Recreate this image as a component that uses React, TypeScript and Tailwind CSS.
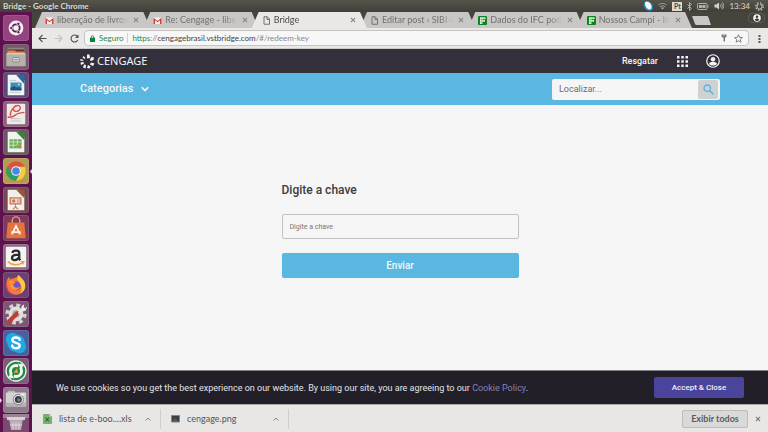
import type { ReactNode } from "react";

type TabProps = {
    title: string;
    icon: ReactNode;
    active?: boolean;
};

const UBUNTU = "font-[Lato,sans-serif]";

function GmailIcon() {
    return (
        <svg className="w-[9px] h-[9px] shrink-0" viewBox="0 0 18 18">
            <path d="M1 3h16v13H1z" fill="#f4f1f0"/>
            <path d="M1 16V3.5l8 6.5 8-6.5V16h-3V8.5l-5 4-5-4V16z" fill="#d93b30"/>
        </svg>
    );
}

function PageIcon() {
    return (
        <svg className="w-[9px] h-[9px] shrink-0" viewBox="0 0 18 18" fill="none" stroke="#717171" strokeWidth={2}>
            <path d="M4 1.500h6.500L15 6v10.500H4z"/>
            <path d="M10 1.500V7h5"/>
        </svg>
    );
}

function InstituteIcon() {
    return (
        <svg className="w-[9px] h-[9px] shrink-0" viewBox="0 0 18 18">
            <rect width="18" height="18" rx="2" fill="#0b851d"/>
            <path d="M4 2.500h11v4H9v1.500h5v4H9v4H4z" fill="#e9f5e9"/>
            <path d="M7.500 2.500v13M4 6.800h11M4 11.500h10M11.500 2.500v9" stroke="#0b851d" strokeWidth={0.6}/>
        </svg>
    );
}

function CloseIcon({ className }: { className: string }) {
    return (
        <svg className={className} viewBox="0 0 10 10" fill="none" stroke="currentColor" strokeWidth={1.8}>
            <path d="M1.500 1.500l7 7M8.500 1.500l-7 7"/>
        </svg>
    );
}

function Tab({ title, icon, active }: TabProps) {
    return (
        <div
            className={`flex-1 min-w-0 -mr-[7px] h-4 pl-[10px] pr-[9px] flex items-center gap-[3px] [clip-path:polygon(7px_0,calc(100%-7px)_0,100%_100%,0_100%)] ${active ? "relative z-10 bg-[#e9e8e7] text-[#4c4c4c]" : "bg-[#c8c7c5] text-[#717171]"}`}
        >
            {icon}
            <span className="flex-1 min-w-0 text-[9px] leading-4 whitespace-nowrap [mask-image:linear-gradient(to_right,black_82%,transparent)]">{title}</span>
            <button aria-label="Fechar guia" className="shrink-0 px-[2px] text-[#858585]">
                <CloseIcon className="w-[6px] h-[6px]"/>
            </button>
        </div>
    );
}

const tabs: TabProps[] = [
    { title: "liberação de livros -", icon: <GmailIcon/> },
    { title: "Re: Cengage - libera", icon: <GmailIcon/> },
    { title: "Bridge", icon: <PageIcon/>, active: true },
    { title: "Editar post ‹ SIBI-IF", icon: <PageIcon/> },
    { title: "Dados do IFC poder", icon: <InstituteIcon/> },
    { title: "Nossos Campi - Inst", icon: <InstituteIcon/> },
];

const launcherItems: { name: string; tile: string; art: ReactNode; running?: boolean }[] = [
    {
        name: "Dash",
        tile: "bg-[#94437f]",
        art: (
            <>
                <circle cx="13" cy="13" r="8" fill="#f6eef4"/>
                <circle cx="13" cy="13" r="4" fill="none" stroke="#5a2049" strokeWidth="2"/>
                <g fill="#5a2049" stroke="#f6eef4" strokeWidth="0.8">
                    <circle cx="7.800" cy="13" r="1.700"/>
                    <circle cx="15.600" cy="8.500" r="1.700"/>
                    <circle cx="15.600" cy="17.500" r="1.700"/>
                </g>
            </>
        ),
    },
    {
        name: "Arquivos",
        tile: "bg-[#77576b]",
        art: (
            <>
                <path d="M4 3h18l1 6H3z" fill="#8c8783"/>
                <path d="M4 5h18v6H4z" fill="#593629"/>
                <path d="M4 6h8l1 1h9v5H4z" fill="#e38a54"/>
                <rect x="2.500" y="9" width="21" height="14" rx="1" fill="#b5b2ae"/>
                <path d="M3 9.500h20" stroke="#dedbd8"/>
                <rect x="9.500" y="13.500" width="7" height="5" rx="1" fill="#dad8d5" stroke="#7a7774" strokeWidth="0.8"/>
                <path d="M11 16h4" stroke="#777"/>
            </>
        ),
    },
    {
        name: "Writer",
        tile: "bg-[#5e4a76]",
        art: (
            <>
                <path d="M4 2h12l6 6v16H4z" fill="#f1f3f4"/>
                <path d="M13 2h9v10z" fill="#246a9b"/>
                <path d="M6 8h7M6 10h11M6 21h12" stroke="#a9bdc9" strokeWidth="0.8"/>
                <rect x="7" y="10.500" width="12" height="8" fill="#3691bd"/>
                <path d="M7 16l4-2 3 2 2-1 3 2v2H7z" fill="#28556c"/>
                <circle cx="16" cy="12.500" r="1" fill="#cce8f4"/>
            </>
        ),
    },
    {
        name: "Evince",
        tile: "bg-[#8d607a]",
        art: (
            <>
                <rect x="3" y="2" width="20" height="22" rx="1" fill="#edebea"/>
                <path d="M4 16c4 2 7-1 10-3 4-2 7-1 8-2M7 15C6 9 12 3 16 4c4 2 0 7-4 6-3-1-2-5 1-6" fill="none" stroke="#d9534b" strokeWidth="1.500"/>
                <path d="M7 18h11M7 20.500h11" stroke="#bdbab9" strokeWidth="0.800"/>
            </>
        ),
    },
    {
        name: "Calc",
        tile: "bg-[#695861]",
        art: (
            <>
                <path d="M4 2h12l6 6v16H4z" fill="#f0f3ee"/>
                <path d="M13 2h9v9z" fill="#368432"/>
                <rect x="6" y="10" width="13" height="10" fill="#69af57"/>
                <path d="M6 13h13M6 16.500h13M10 10v10M14.500 10v10" stroke="#e4f1df" strokeWidth="0.800"/>
                <path d="M14 16h1.500v3H14zM16.500 14.500H18V19h-1.500z" fill="#d77137"/>
            </>
        ),
    },
    {
        name: "Google Chrome",
        tile: "bg-[#b39b51]",
        running: true,
        art: (
            <>
                <circle cx="13" cy="13" r="10.500" fill="#dd5143"/>
                <path d="M3.900 7.750A10.500 10.500 0 0 0 13 23.500l5-9-5 3-5-3z" fill="#25a464"/>
                <path d="M13 23.500A10.500 10.500 0 0 0 22.500 8.500H13l5 6z" fill="#f5cd41"/>
                <circle cx="13" cy="13" r="5.200" fill="#f3f4f5"/>
                <circle cx="13" cy="13" r="4.100" fill="#4588e8"/>
            </>
        ),
    },
    {
        name: "Impress",
        tile: "bg-[#774a53]",
        art: (
            <>
                <path d="M4 2h12l6 6v16H4z" fill="#f2eeeb"/>
                <path d="M13 2h9v9z" fill="#9c5632"/>
                <path d="M6 10h13v8H6zM12 18h1v2l3 3h-2l-1.500-2-1.500 2H9l3-3z" fill="#c87857"/>
                <path d="M7.500 11.500h10v5h-10z" fill="#f1d7c8"/>
                <circle cx="10.500" cy="14" r="1.800" fill="#c87857"/>
                <path d="M14 13h3M14 15h3" stroke="#c87857" strokeWidth="0.800"/>
            </>
        ),
    },
    {
        name: "Programas do Ubuntu",
        tile: "bg-[#7b3c5b]",
        art: (
            <>
                <path d="M9 8V5a4 4 0 0 1 8 0v3" fill="none" stroke="#eb9b75" strokeWidth="1.500"/>
                <path d="M4 7h18l1.500 17h-21z" fill="#e4733d"/>
                <path d="M8.500 20l4.500-9 4.500 9M8 17.500h10" fill="none" stroke="#fff2e9" strokeWidth="2"/>
            </>
        ),
    },
    {
        name: "Amazon",
        tile: "bg-[#8a6a80]",
        art: (
            <>
                <rect x="2" y="2" width="22" height="22" rx="1" fill="#f4f3f2"/>
                <path d="M9 8.500c1-3.500 7.500-3 7.500 0V15l1.200 1.500M16 10.500c-5 0-7.300 1-7.300 3.500 0 3.300 5.800 3 7.300-.5" fill="none" stroke="#292929" strokeWidth="2.500"/>
                <path d="M4 18c5 4.500 12 4.500 17 .7M18 18h3.500L20 21" fill="none" stroke="#f0a13b" strokeWidth="1.500"/>
            </>
        ),
    },
    {
        name: "Firefox",
        tile: "bg-[#6b416f]",
        art: (
            <>
                <path d="M13 5l3-3c1 3 7 5 7 12 0 5-4 9.500-10 9.500S2.500 19 2.500 13c0-4 1-7 3-9l1 3c2-1 4-1 6.500-2z" fill="#f57937"/>
                <path d="M16 2c1 3 7 5 7 12 0 4-3 7-5 8 3-6 0-11-4-15z" fill="#fbc93d"/>
                <path d="M3 10c0 7 3 12 9 13.500-6 0-9.500-4-9.500-10z" fill="#e53a69"/>
                <circle cx="13" cy="14" r="5" fill="#7552c6"/>
                <path d="M5 9c3-2 5 0 8 1l-3 2c0 4 4 5 7 3-2 6-11 4-11-3z" fill="#fb9438"/>
            </>
        ),
    },
    {
        name: "Configurações do sistema",
        tile: "bg-[#7a5873]",
        art: (
            <>
                <circle cx="13" cy="13" r="9.500" fill="none" stroke="#d5d3d2" strokeWidth="4" strokeDasharray="4 3.460"/>
                <circle cx="13" cy="13" r="6" fill="#a9a6a8" stroke="#e2e0df" strokeWidth="4"/>
                <path d="M6 20.500l8-8" stroke="#c13b35" strokeWidth="4.500" strokeLinecap="round"/>
                <path d="M15 12l4-4c-1-3 1-5 3-5l-1 3 2 1 2-2c0 4-3 5-5 4l-4 4z" fill="#f0eeee"/>
            </>
        ),
    },
    {
        name: "Skype",
        tile: "bg-[#4b609a]",
        art: (
            <>
                <circle cx="9" cy="9" r="7" fill="#1fa9e5"/>
                <circle cx="17" cy="17" r="7" fill="#1fa9e5"/>
                <circle cx="13" cy="13" r="9.500" fill="#1fa9e5"/>
                <path d="M17 9.500c-1-3.500-8-3-8 .3 0 4 8 2 8 6 0 3.800-7.500 4-8.200 0" fill="none" stroke="#fff" strokeWidth="2.600" strokeLinecap="round"/>
            </>
        ),
    },
    {
        name: "Sincronizador",
        tile: "bg-[#7c5d78]",
        art: (
            <>
                <circle cx="13" cy="13" r="10.800" fill="#23894b" stroke="#e8f3e9" strokeWidth="1.500"/>
                <circle cx="13" cy="13" r="6" fill="none" stroke="#f3f9ed" strokeWidth="3.200"/>
                <path d="M17 3l-1 7M9 23l1-7" stroke="#23894b" strokeWidth="2"/>
                <path d="M15 5l6 1-2 6zM11 21l-6-1 2-6z" fill="#f3f9ed"/>
                <path d="M10.500 15l3.500-5 1.500 5z" fill="#e8a832"/>
            </>
        ),
    },
    {
        name: "Captura de tela",
        tile: "bg-[#8e7b8c]",
        running: true,
        art: (
            <>
                <path d="M4 6V3h8v3z" fill="#b9b6b9"/>
                <rect x="2" y="5" width="22" height="15" rx="1" fill="#d3d1d1"/>
                <path d="M2 16h22v4H2z" fill="#b4b0b4"/>
                <circle cx="15.500" cy="12.500" r="5.500" fill="#eceaea" stroke="#777579" strokeWidth="1"/>
                <circle cx="15.500" cy="12.500" r="3.800" fill="#333b43"/>
                <circle cx="16" cy="13" r="1.800" fill="#6c8195"/>
                <path d="M18 7h4" stroke="#f4f4f4" strokeWidth="1.500"/>
            </>
        ),
    },
];

function Launcher() {
    return (
        <aside className="w-8 shrink-0 bg-[#5d114e] flex flex-col">
            <nav className="flex-1 pt-[3px] pb-px flex flex-col items-center justify-between">
                {launcherItems.map(item => (
                    <button key={item.name} aria-label={item.name} className="relative w-full flex justify-center">
                        <svg className={`w-[26px] h-[26px] rounded-[3px] border border-white/10 ${item.tile}`} viewBox="0 0 26 26">
                            {item.art}
                        </svg>
                        {item.running && (
                            <svg className="absolute left-0 top-[11px] w-[2px] h-[5px]" viewBox="0 0 2 5">
                                <path d="M0 0l2 2.500L0 5z" fill="#e8dbe5"/>
                            </svg>
                        )}
                        {item.name === "Google Chrome" && (
                            <svg className="absolute right-0 top-[11px] w-[2px] h-[5px]" viewBox="0 0 2 5">
                                <path d="M2 0L0 2.500 2 5z" fill="#e8dbe5"/>
                            </svg>
                        )}
                    </button>
                ))}
            </nav>
            <button aria-label="Lixeira" className="flex justify-center">
                <svg className="w-[26px] h-[18px] bg-[#7a4a70]" viewBox="0 0 26 18">
                    <path d="M0 0h26v4H0z" fill="#9c8297"/>
                    <path d="M6 5h14l-2 11H8z" fill="#b6a8b3"/>
                    <path d="M4 3h18v3H4z" fill="#d9d1d7"/>
                    <path d="M10 8v7M13 8v7M16 8v7M7 11h12" stroke="#e5dde3" strokeWidth="0.800"/>
                </svg>
            </button>
        </aside>
    );
}

function SystemBar() {
    return (
        <header className="h-3 px-[3px] bg-linear-to-b from-[#56544b] to-[#403f39] text-[#dcd8ce] flex items-center justify-between">
            <span className="text-[8px] leading-3 font-bold">Bridge - Google Chrome</span>
            <div className="flex items-center gap-[5px]">
                <svg className="w-[10px] h-[10px]" viewBox="0 0 20 20">
                    <path d="M3 1l8-1 8 7 1 10-6 3-8-2-5-8z" fill="#1792c9"/>
                    <path d="M5 2c6-2 13 4 12 11-1 6-8 5-11-1-2-4-3-8-1-10z" fill="#f6fafb"/>
                </svg>
                <svg className="w-[9px] h-[7px]" viewBox="0 0 18 14" fill="none" stroke="#aaa79e" strokeWidth={2}>
                    <path d="M1 4c5-4 11-4 16 0M4 8c3-3 7-3 10 0"/>
                    <path d="M9 13l-3-3c2-2 4-2 6 0z" fill="#aaa79e" stroke="none"/>
                </svg>
                <span className="w-[10px] h-[9px] bg-[#dedbd3] text-[#4a4943] text-[7px] leading-[9px] font-bold text-center">Pt</span>
                <svg className="w-[5px] h-[9px]" viewBox="0 0 10 18" fill="none" stroke="#bab7ae" strokeWidth={1.8}>
                    <path d="M1 5l8 8-4 4V1l4 4-8 8"/>
                </svg>
                <svg className="w-[12px] h-[7px]" viewBox="0 0 24 14">
                    <rect x="1" y="1" width="19" height="12" rx="2" fill="none" stroke="#b5b2a9" strokeWidth="2"/>
                    <path d="M4 4h5l2 2 1-2h5v6h-5l-2-2-1 2H4zM21 5h2v4h-2z" fill="#b5b2a9"/>
                </svg>
                <svg className="w-[10px] h-[8px]" viewBox="0 0 20 16" fill="none" stroke="#b5b2a9" strokeWidth={1.8}>
                    <path d="M1 5h4l5-4v14l-5-4H1z" fill="#d6d3ca" stroke="none"/>
                    <path d="M12 5c2 2 2 4 0 6M14 3c4 3 4 7 0 10M16 1c5 4 5 10 0 14"/>
                </svg>
                <span className="text-[8px] leading-3">13:34</span>
                <svg className="w-[9px] h-[9px] mr-px" viewBox="0 0 18 18" fill="none" stroke="#c9c6bd">
                    <circle cx="9" cy="9" r="5" strokeWidth="2"/>
                    <circle cx="9" cy="9" r="7.500" strokeWidth="2.500" strokeDasharray="3 2.890"/>
                    <path d="M9 2v6" stroke="#47463f" strokeWidth="2.500"/>
                </svg>
            </div>
        </header>
    );
}

function TabStrip() {
    return (
        <div className="h-4 pl-[3px] bg-[#45443d] flex items-start">
            <div className="flex-1 min-w-0 flex pr-[7px]">
                {tabs.map(tab => (
                    <Tab key={tab.title} {...tab}/>
                ))}
            </div>
            <button aria-label="Nova guia" className="w-[19px] h-[9px] mt-1">
                <svg className="w-full h-full" viewBox="0 0 19 9">
                    <path d="M0 0h15q1 0 1.300 1L19 9H5q-1.500 0-2-1z" fill="#c8c7c5"/>
                </svg>
            </button>
            <button aria-label="Perfil" className="w-[17px] h-[10px] mt-px ml-[37px] mr-[3px] rounded-sm border border-[#5c5b54] flex items-center justify-center">
                <svg className="w-2 h-2" viewBox="0 0 16 16">
                    <circle cx="8" cy="8" r="7.500" fill="#f4f4f2"/>
                    <circle cx="8" cy="5.500" r="2.500" fill="#3c3b36"/>
                    <path d="M3.500 12c1-4 8-4 9 0-2 2.500-7 2.500-9 0z" fill="#3c3b36"/>
                </svg>
            </button>
        </div>
    );
}

function Toolbar() {
    return (
        <div className="h-[21px] pl-[6px] pr-[7px] bg-[#e9e8e7] border-b border-[#c9c8c7] flex items-center">
            <button aria-label="Voltar">
                <svg className="w-[9px] h-[9px]" viewBox="0 0 18 18" fill="none" stroke="#4f4f4f" strokeWidth={2.2}>
                    <path d="M17 9H2M9 2L2 9l7 7"/>
                </svg>
            </button>
            <button aria-label="Avançar" className="ml-[7px]">
                <svg className="w-[9px] h-[9px]" viewBox="0 0 18 18" fill="none" stroke="#c3c2c1" strokeWidth={2.2}>
                    <path d="M1 9h15M9 2l7 7-7 7"/>
                </svg>
            </button>
            <button aria-label="Recarregar" className="ml-[7px]">
                <svg className="w-[9px] h-[9px]" viewBox="0 0 18 18" fill="none" stroke="#4f4f4f" strokeWidth={2.2}>
                    <path d="M15.500 12A7 7 0 1 1 14 4l2 2"/>
                    <path d="M17 1v7h-7z" fill="#4f4f4f" stroke="none"/>
                </svg>
            </button>
            <div className="flex-1 h-4 ml-[5px] px-[5px] bg-[#f7f7f7] rounded-sm border border-[#c5c4c3] flex items-center text-[8px] leading-[14px]">
                <svg className="w-[5px] h-[7px] shrink-0" viewBox="0 0 10 14">
                    <path d="M2.500 6V4a2.500 2.500 0 0 1 5 0v2" fill="none" stroke="#0b8043" strokeWidth="1.600"/>
                    <path d="M0 5.500h10V14H0z" fill="#0b8043"/>
                </svg>
                <span className="ml-1 pr-1 text-[#1c8a4c]">Seguro</span>
                <span className="w-px h-[10px] mr-1 bg-[#d0d0d0]"></span>
                <span className="flex-1 text-[#8a8a8a]">
                    <span className="text-[#1c8a4c]">https</span>://<span className="text-[#3f3f3f]">cengagebrasil.vstbridge.com</span>/#/redeem-key
                </span>
                <svg className="w-[6px] h-[8px]" viewBox="0 0 12 16" fill="#767676">
                    <path d="M1 1h10v4L8 8v7H5V8L1 5z"/>
                    <path d="M4 3h4" stroke="#ddd"/>
                </svg>
                <svg className="w-[9px] h-[9px] ml-[7px]" viewBox="0 0 18 18" fill="none" stroke="#666" strokeWidth={1.6}>
                    <path d="M9 1.500l2.200 5.200 5.600.5-4.200 3.700 1.200 5.500L9 13.500l-4.800 2.900 1.200-5.500L1.200 7.200l5.600-.5z"/>
                </svg>
            </div>
            <button aria-label="Menu" className="ml-[9px]">
                <svg className="w-[3px] h-[9px]" viewBox="0 0 3 9" fill="#555">
                    <path d="M.5 1h2v2h-2zM.5 4h2v2h-2zM.5 7h2v2h-2z"/>
                </svg>
            </button>
        </div>
    );
}

function SiteHeader() {
    return (
        <>
            <div className="h-6 px-12 bg-[#33303b] flex items-center justify-between text-[#f5f5f5]">
                <a href="#" className="flex items-center gap-[2px]">
                    <svg className="w-[15px] h-[15px]" viewBox="0 0 30 30" fill="#f5f5f5">
                        <path d="M14 1l5 0 1 7-6 1z"/>
                        <path d="M23 6l5 1-1 5-6 2-1-3z"/>
                        <path d="M22 17l7 2-3 5-6-3z"/>
                        <path d="M16 22l5 3-2 4-5-1z"/>
                        <path d="M8 21l4 1-1 7-5-2z"/>
                        <path d="M1 17l6-1 1 3-6 3z"/>
                        <path d="M1 10l6 2-1 2-6-1z"/>
                        <path d="M7 4l4 4-2 2-4-3z"/>
                    </svg>
                    <span className="text-[11px] leading-4 font-['Noto_Sans',sans-serif]">CENGAGE</span>
                </a>
                <div className="flex items-center">
                    <a href="#" className="text-[9px] leading-4 font-medium">Resgatar</a>
                    <button aria-label="Aplicativos" className="ml-[19px]">
                        <svg className="w-[11px] h-[11px]" viewBox="0 0 22 22" fill="#f5f5f5">
                            <path d="M0 0h5v5H0zM8.500 0h5v5h-5zM17 0h5v5h-5zM0 8.500h5v5H0zM8.500 8.500h5v5h-5zM17 8.500h5v5h-5zM0 17h5v5H0zM8.500 17h5v5h-5zM17 17h5v5h-5z"/>
                        </svg>
                    </button>
                    <button aria-label="Conta" className="ml-[18px]">
                        <svg className="w-[14px] h-[14px]" viewBox="0 0 28 28">
                            <circle cx="14" cy="14" r="12.500" fill="none" stroke="#f5f5f5" strokeWidth="2.400"/>
                            <circle cx="14" cy="10.500" r="4.500" fill="#f5f5f5"/>
                            <path d="M6 20c1-6 15-6 16 0-4 4-12 4-16 0z" fill="#f5f5f5"/>
                        </svg>
                    </button>
                </div>
            </div>
            <div className="h-8 px-12 bg-[#59b7e1] flex items-center justify-between">
                <button className="flex items-center gap-2 text-[11px] leading-4 font-medium text-[#f5f5f5]">
                    Categorias
                    <svg className="w-[8px] h-[6px]" viewBox="0 0 16 12" fill="none" stroke="#f5f5f5" strokeWidth={3.5}>
                        <path d="M1.500 2.500L8 9l6.500-6.500"/>
                    </svg>
                </button>
                <form className="w-[168px] h-[21px] p-px bg-[#f5f5f5] rounded-[2px] flex" onSubmit={e => e.preventDefault()}>
                    <input aria-label="Localizar" placeholder="Localizar..." className="flex-1 min-w-0 pl-[6px] pt-px text-[9px] outline-none placeholder:text-[#6d6d6d]"/>
                    <button aria-label="Buscar" className="w-5 bg-[#d0d1d2] rounded-[2px] flex items-center justify-center mr-px">
                        <svg className="w-[11px] h-[11px]" viewBox="0 0 22 22" fill="none" stroke="#59b7e1">
                            <circle cx="8.500" cy="8.500" r="6.500" strokeWidth="2.800"/>
                            <path d="M13.500 13.500l7 7" strokeWidth="3.400"/>
                        </svg>
                    </button>
                </form>
            </div>
        </>
    );
}

function RedeemForm() {
    return (
        <main className="flex-1 px-4 pt-[77px] pb-8">
            <form className="max-w-[237px] mx-auto flex flex-col" onSubmit={e => e.preventDefault()}>
                <label htmlFor="redeem-key" className="text-[12px] leading-4 font-medium text-[#3b3b3b]">Digite a chave</label>
                <input
                    id="redeem-key"
                    placeholder="Digite a chave"
                    className="h-[25px] mt-4 px-[7px] text-[7px] rounded-[2px] border border-[#c2c2c2] outline-none placeholder:text-[#777]"
                />
                <button className="h-[25px] mt-[14px] bg-[#59b7e1] rounded-[2px] text-[10px] font-medium text-[#f5f5f5]">Enviar</button>
            </form>
        </main>
    );
}

function DownloadItem({ name, icon }: { name: string; icon: ReactNode }) {
    return (
        <div className="w-32 h-5 pr-[9px] border-r border-[#cfcecd] flex items-center">
            {icon}
            <span className="flex-1 ml-[7px] text-[9px] leading-4 text-[#555]">{name}</span>
            <button aria-label={`Opções de ${name}`}>
                <svg className="w-[6px] h-[4px]" viewBox="0 0 12 8" fill="none" stroke="#858585" strokeWidth={2}>
                    <path d="M1 7l5-5 5 5"/>
                </svg>
            </button>
        </div>
    );
}

function DownloadBar() {
    return (
        <footer className={`h-7 pl-[1px] pr-[7px] bg-[#e8e7e6] border-t border-[#a9a8a8] flex items-center ${UBUNTU}`}>
            <div className="flex-1 flex">
                <DownloadItem
                    name="lista de e-boo....xls"
                    icon={
                        <svg className="w-[9px] h-[10px] ml-[10px]" viewBox="0 0 18 20">
                            <path d="M1 1h12l4 4v14H1z" fill="#75b66b" stroke="#4b8546"/>
                            <path d="M5 7l7 8M12 7l-7 8" stroke="#28632a" strokeWidth="2.200"/>
                            <path d="M13 1v4h4z" fill="#d6ead2"/>
                        </svg>
                    }
                />
                <DownloadItem
                    name="cengage.png"
                    icon={
                        <svg className="w-[9px] h-[8px] ml-[10px]" viewBox="0 0 18 16">
                            <path d="M1 1h16v13H1z" fill="#3f3f3f" stroke="#858585" strokeWidth="2"/>
                            <path d="M3 10l5-4 7 6H3z" fill="#555"/>
                        </svg>
                    }
                />
            </div>
            <button className="w-[66px] h-[18px] bg-[#dad9d8] border border-[#bdbcbb] rounded-[2px] text-[9px] leading-4 font-bold text-[#5c5c5c]">Exibir todos</button>
            <button aria-label="Fechar" className="ml-[7px] text-[#777]">
                <CloseIcon className="w-[6px] h-[6px]"/>
            </button>
        </footer>
    );
}

export default function App() {
    return (
        <div className={`min-h-screen flex flex-col bg-[#f5f5f5] ${UBUNTU}`}>
            <SystemBar/>
            <div className="flex-1 flex">
                <Launcher/>
                <div className="flex-1 min-w-0 flex flex-col">
                    <TabStrip/>
                    <Toolbar/>
                    <div className="flex-1 flex flex-col font-[Roboto,sans-serif]">
                        <SiteHeader/>
                        <RedeemForm/>
                        <div className="h-[34px] px-6 bg-[#221f29] border-t border-[#85848a] flex items-center justify-between">
                            <p className="text-[9px] leading-4 text-[#e4e4e6]">
                                We use cookies so you get the best experience on our website. By using our site, you are agreeing to our <a href="#" className="text-[#8580bd]">Cookie Policy</a>.
                            </p>
                            <button className="w-[90px] h-[21px] bg-[#4b449c] rounded-[2px] text-[8px] font-medium text-[#f0f0f5]">Accept &amp; Close</button>
                        </div>
                    </div>
                    <DownloadBar/>
                </div>
            </div>
        </div>
    );
}
